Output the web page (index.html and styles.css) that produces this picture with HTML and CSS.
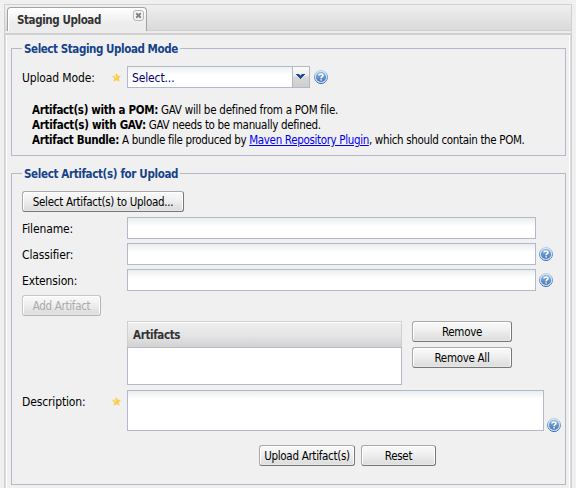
FILE: index.html
```
<!DOCTYPE html>
<html lang="en">
<head>
<meta charset="utf-8">
<title>Staging Upload</title>
<link rel="stylesheet" href="styles.css">
</head>
<body>
<svg class="defs" width="0" height="0">
  <defs>
    <linearGradient id="disc" x1="0" y1="0" x2="0" y2="1">
      <stop offset="0" stop-color="#8db6df"/>
      <stop offset="1" stop-color="#4377b8"/>
    </linearGradient>
    <linearGradient id="rim" x1="0" y1="0" x2="0" y2="1">
      <stop offset="0" stop-color="#b5cfea"/>
      <stop offset="1" stop-color="#2f66ac"/>
    </linearGradient>
    <symbol id="help" viewBox="0 0 14 14">
      <circle cx="7" cy="7" r="6.5" fill="#dce9f6" stroke="url(#rim)"/>
      <circle cx="7" cy="7" r="5.1" fill="url(#disc)"/>
      <path d="M5 5.5C5 3.5 9 3.5 9 5.4C9 6.7 7.1 6.6 7.1 8.2M7.1 9.2V10.6" fill="none" stroke="#fff" stroke-width="1.6"/>
    </symbol>
    <symbol id="star" viewBox="0 0 9 9">
      <path d="M4.5 .5L5.7 3.1L8.5 3.4L6.5 5.3L7.1 8.3L4.5 6.9L1.9 8.3L2.5 5.3L.5 3.4L3.3 3.1Z" fill="#f8d04c" stroke="#f5cf5c" stroke-width=".6"/>
      <path d="M4.2 2.4L3.9 4.8L2.3 4Z" fill="#fdf0b0"/>
    </symbol>
  </defs>
</svg>
<main class="panel">
  <header class="tabs">
    <div class="tab">
      <span class="tab-title">Staging Upload</span>
      <svg class="close" viewBox="0 0 11 11"><rect x=".5" y=".5" width="10" height="10" rx="2.5" fill="#f6f6f6" stroke="#b4b4b4"/><path d="M3.2 3.2L7.8 7.8M7.8 3.2L3.2 7.8" stroke="#858585" stroke-width="2"/></svg>
    </div>
  </header>
  <div class="body">
    <fieldset class="mode">
      <legend>Select Staging Upload Mode</legend>
      <div class="row">
        <label class="label">Upload Mode:</label>
        <svg class="star"><use href="#star"/></svg>
        <div class="combo"><span class="combo-text">Select...</span><span class="trigger"><svg viewBox="0 0 16 20"><path d="M3 7H6L7.5 8.5L9 7H12V8H11V9H10V10H9V11H8V12H7V11H6V10H5V9H4V8H3Z" fill="#254a8d"/></svg></span></div>
        <svg class="help"><use href="#help"/></svg>
      </div>
      <div class="notes">
        <div class="n1"><b>Artifact(s) with a POM:</b> GAV will be defined from a POM file.</div>
        <div class="n2"><b>Artifact(s) with GAV:</b> GAV needs to be manually defined.</div>
        <div class="n3"><b>Artifact Bundle:</b> A bundle file produced by <a href="#">Maven Repository Plugin</a>, which should contain the POM.</div>
      </div>
    </fieldset>
    <fieldset class="files">
      <legend class="second">Select Artifact(s) for Upload</legend>
      <button class="btn select">Select Artifact(s) to Upload...</button>
      <div class="row"><label class="label">Filename:</label><div class="input"></div></div>
      <div class="row"><label class="label">Classifier:</label><div class="input"></div><svg class="help"><use href="#help"/></svg></div>
      <div class="row"><label class="label">Extension:</label><div class="input"></div><svg class="help"><use href="#help"/></svg></div>
      <button class="btn add" disabled>Add Artifact</button>
      <div class="list-row">
        <div class="list"><div class="list-head">Artifacts</div></div>
        <div class="list-actions"><button class="btn">Remove</button><button class="btn">Remove All</button></div>
      </div>
      <div class="row description">
        <label class="label">Description:</label>
        <svg class="star"><use href="#star"/></svg>
        <div class="input area"></div>
        <svg class="help"><use href="#help"/></svg>
      </div>
      <div class="footer"><button class="btn upload">Upload Artifact(s)</button><button class="btn reset">Reset</button></div>
    </fieldset>
  </div>
</main>
</body>
</html>
```
FILE: styles.css
```
* { box-sizing: border-box; }
html, body { height: 100%; overflow: hidden; }
body {
  margin: 0;
  padding: 4px 4px 0;
  background: #f0f0f0;
  color: #000;
  font: 12px "DejaVu Sans Condensed", "Noto Sans", sans-serif;
}
.defs { position: absolute; }
.panel { width: 568px; height: 484px; border: 1px solid #d0d0d0; border-bottom: 0; }
.tabs {
  height: 30px;
  padding: 2px 0 0 2px;
  background: linear-gradient(#efefef, #dadada 25px, #d0d0d0 25px, #d0d0d0 26px, #ececec 26px, #ececec 28px, #d0d0d0 28px);
}
.tab {
  display: flex;
  width: 140px;
  height: 24px;
  padding: 0 2px 0 9px;
  border: 1px solid #a2a2a2;
  border-bottom: 0;
  border-radius: 4px 4px 0 0;
  background: linear-gradient(#fff, #ececec 70%);
  box-shadow: inset 1px 1px #fff;
}
.tab-title { flex: 1; font-size: 11.5px; font-weight: bold; line-height: 24px; color: #333; letter-spacing: -.4px; }
.close { width: 11px; height: 11px; margin-top: 2px; }
.body { height: 453px; padding: 6px 4px 0; border: 1px solid #dcdcdc; border-top: 0; border-bottom: 0; box-shadow: inset 1px 0 #fff, inset -1px 0 #fff; }
fieldset { margin: 0 0 0 1px; border: 1px solid #b5b8c8; min-width: 0; width: 555px; }
legend { margin: 0; padding: 0 2px; height: 15px; line-height: 17px; font-size: 11.5px; font-weight: bold; color: #15428b; letter-spacing: -.42px; }
.second { letter-spacing: -.35px; }
.mode { height: 115px; padding: 10px 10px 0; }
.files { height: 319px; margin-top: 10px; padding: 10px 10px 0; }
.row { display: flex; height: 22px; margin-bottom: 4px; }
.row > * { flex: none; }
.label { width: 90px; height: 22px; line-height: 24px; letter-spacing: -.13px; white-space: nowrap; }
.label + .input { margin-left: 15px; }
.star { width: 9px; height: 9px; margin: 7px 6px 0 0; }
.combo { display: flex; width: 183px; height: 22px; border: 1px solid #b5b8c8; background: linear-gradient(#edf1f2, #fff 8px); }
.combo-text { flex: 1; padding-left: 4px; color: #000078; line-height: 22px; letter-spacing: -.13px; }
.trigger { width: 17px; border-left: 1px solid #b5b8c8; background: linear-gradient(#fafafa, #eee 45%, #d8d8d8 50%, #cecece); }
.trigger svg { display: block; width: 16px; height: 20px; }
.help { width: 14px; height: 14px; margin: 4px 0 0 3px; }
.combo + .help { margin-left: 4px; }
.notes { margin-top: 15px; padding-left: 10px; font-size: 11.5px; line-height: 15px; white-space: nowrap; }
.n1 { letter-spacing: -.25px; }
.n1 b { letter-spacing: -.34px; }
.n2 { letter-spacing: -.32px; }
.n2 b { letter-spacing: -.28px; }
.n3, .n3 b { letter-spacing: -.34px; }
.notes a { color: #0000ee; }
.input { width: 409px; height: 22px; border: 1px solid #b5b8c8; background: linear-gradient(#e9edee, #fff 8px); }
.btn {
  display: block;
  height: 21px;
  margin: 0;
  padding: 1px 0 0;
  border: 1px solid #aaa;
  border-right-color: #777;
  border-bottom-color: #777;
  border-radius: 3px;
  background: linear-gradient(#fafafa, #efefef 45%, #dedede 90%, #e8e8e8);
  box-shadow: inset 1px 1px #fff, inset -1px 0 #fff;
  color: #000;
  font: 11.5px/18px "DejaVu Sans Condensed", "Noto Sans", sans-serif;
  letter-spacing: -.3px;
  white-space: nowrap;
}
.btn:disabled { color: #aaa; border-color: #c6c6c6 #b5b5b5 #b5b5b5 #c6c6c6; }
.select { width: 162px; margin-bottom: 5px; }
.add { width: 79px; }
.list-row { display: flex; gap: 10px; margin: 5px 0 5px 105px; }
.list { width: 275px; height: 64px; border: 1px solid #b5b8c8; background: #fff; }
.list-head { height: 26px; margin: -1px -1px 0; padding-left: 5px; border: 1px solid #d0d0d0; border-bottom: 0; background: linear-gradient(#fff 1px, #eee 1px, #e4e4e4 55%, #d2d2d2); color: #333; font-size: 11.5px; font-weight: bold; line-height: 27px; letter-spacing: -.35px; box-shadow: 0 1px #b5b8c8; }
.list-actions { display: grid; gap: 5px; align-content: start; width: 100px; }
.description { height: 41px; margin-bottom: 14px; }
.area { width: 417px; height: 41px; }
.description .help { margin-top: 28px; }
.footer { display: flex; gap: 6px; margin-left: 237px; }
.upload { width: 96px; }
.reset { width: 75px; }
```
